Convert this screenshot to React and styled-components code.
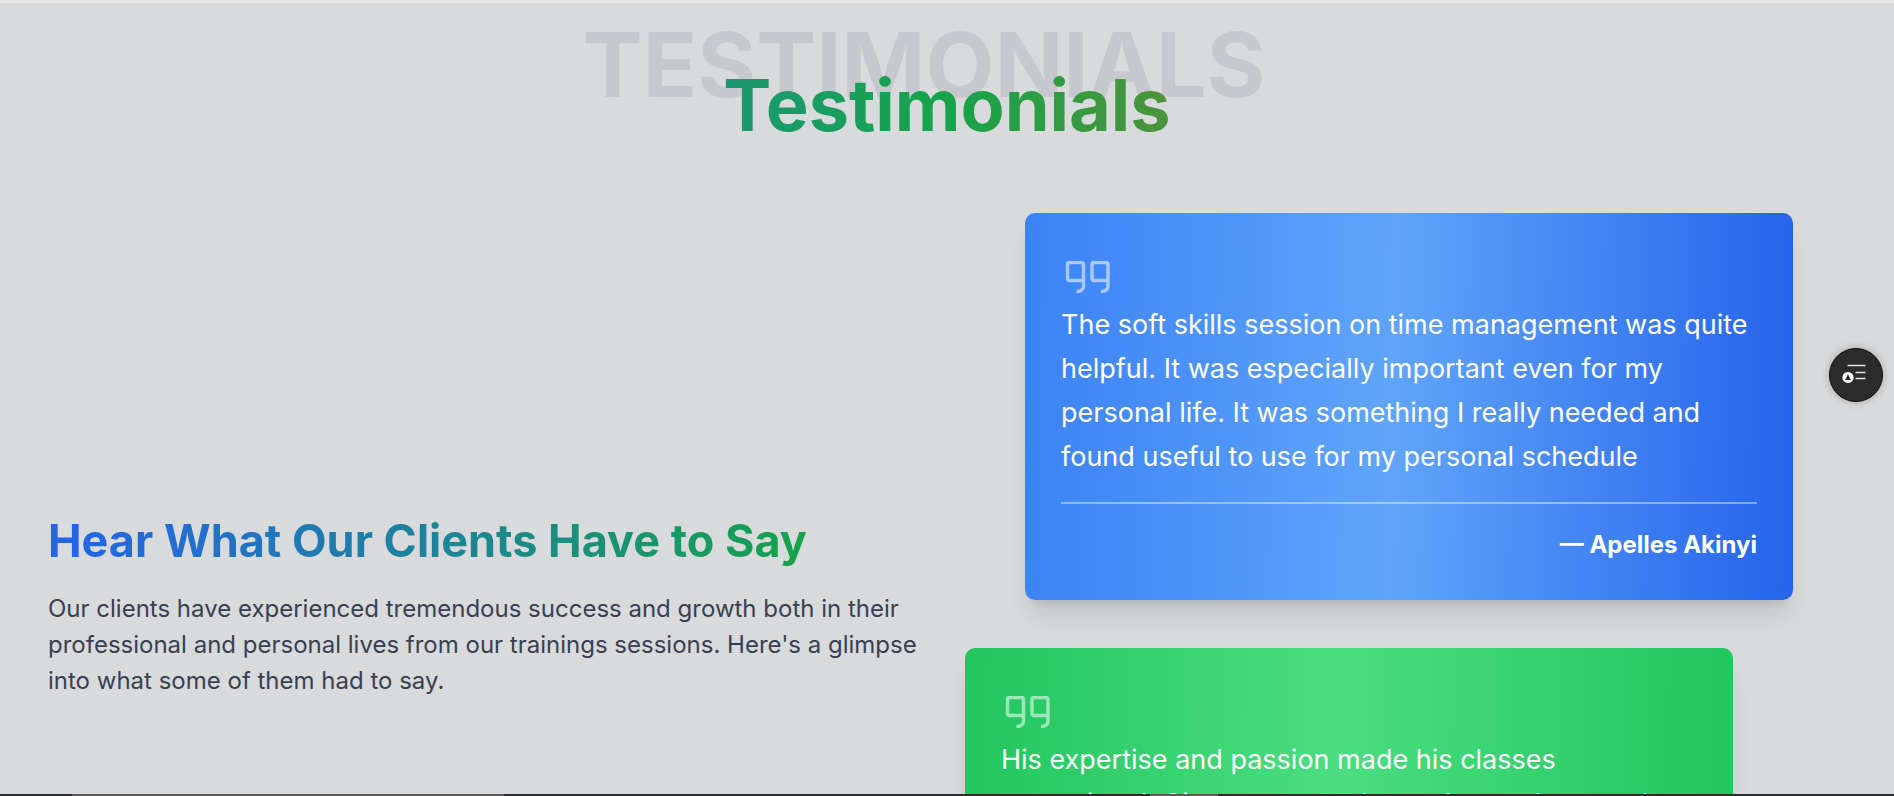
import styled, { createGlobalStyle } from "styled-components";

const GlobalStyle = createGlobalStyle`
	html, body {
		margin: 0;
		padding: 0;
		height: 100%;
		overflow: hidden;
		background: #d8d9db;
	}
	* {
		box-sizing: border-box;
	}
`;

const Page = styled.div`
	height: 796px;
	display: flex;
	flex-direction: column;
	position: relative;
	overflow: hidden;
	font-family: Inter, "Liberation Sans", sans-serif;
	background: #d9dadc;
`;

const TopEdge = styled.div`
	height: 3px;
	flex: none;
	background: #e7e7e8;
`;

const BottomEdge = styled.div`
	height: 2px;
	flex: none;
	display: flex;
	background: #2a2c2d;
`;

const EdgeMark = styled.span`
	width: ${(p) => p.$width}px;
	margin-left: ${(p) => p.$offset}px;
	background: #5a5a5a;
`;

const Content = styled.main`
	flex: 1;
	min-height: 0;
	overflow: hidden;
	padding: 0 48px;
`;

const Heading = styled.header`
	position: relative;
	height: 210px;
	padding-top: 62px;
	text-align: center;
`;

const GhostTitle = styled.div`
	position: absolute;
	top: 17px;
	left: 0;
	right: 46px;
	font-size: 90px;
	font-weight: 700;
	line-height: 90px;
	color: #c7c8cd;
`;

const Title = styled.h2`
	position: relative;
	margin: 0;
	font-size: 72px;
	font-weight: 700;
	line-height: 80px;
`;

const TitleGradient = styled.span`
	background: linear-gradient(90deg, #1b9873, #16a34a 50%, #4d933c);
	-webkit-background-clip: text;
	background-clip: text;
	color: transparent;
`;

const Columns = styled.div`
	display: grid;
	grid-template-columns: 885px 1fr;
	gap: 32px;
`;

const Intro = styled.div`
	padding-top: 300px;
`;

const IntroTitle = styled.h3`
	display: inline-block;
	margin: 0 0 22px;
	font-size: 45px;
	font-weight: 700;
	line-height: 56px;
	background: linear-gradient(90deg, #2563eb, #16a34a);
	-webkit-background-clip: text;
	background-clip: text;
	color: transparent;
`;

const IntroText = styled.p`
	margin: 0;
	font-size: 24px;
	line-height: 36px;
	color: #374151;
`;

const Cards = styled.div`
	display: flex;
	flex-direction: column;
	gap: 48px;
`;

const Card = styled.article`
	width: 768px;
	margin-left: ${(p) => p.$indent || 0}px;
	padding: 48px 36px 39px;
	border-radius: 10px;
	color: #fff;
	background: ${(p) => p.$bg};
	box-shadow: 0 20px 25px -5px rgba(0, 0, 0, 0.1), 0 8px 10px -6px rgba(0, 0, 0, 0.1);
`;

const QuoteMark = styled.svg`
	display: block;
	width: 46px;
	height: 34px;
	margin: 0 0 8px 3px;
	fill: none;
	stroke: rgba(255, 255, 255, 0.55);
	stroke-width: 3.4;
`;

const CardText = styled.p`
	margin: 0;
	font-size: 27px;
	line-height: 44px;
`;

const Divider = styled.hr`
	height: 2px;
	margin: 23px 0 0;
	border: none;
	background: rgba(255, 255, 255, 0.42);
`;

const Author = styled.p`
	margin: 25px 0 0;
	text-align: right;
	font-size: 24px;
	font-weight: 700;
	line-height: 32px;
`;

const FloatButton = styled.button`
	position: absolute;
	top: 348px;
	left: 1829px;
	width: 54px;
	height: 54px;
	padding: 0;
	display: flex;
	align-items: center;
	justify-content: center;
	border: 1.5px solid #111;
	border-radius: 50%;
	background: #2b2b2b;
	box-shadow: 0 0 8px rgba(0, 0, 0, 0.25);
`;

const Quote = () => (
	<QuoteMark viewBox="0 0 46 34">
		<path d="M19.5 19.5H5.5Q3.5 19.5 3.5 17.5V3.5Q3.5 1.5 5.5 1.5H17.5Q19.5 1.5 19.5 3.5V25Q19.5 30.5 12.5 30.5" />
		<path d="M44 19.5H30Q28 19.5 28 17.5V3.5Q28 1.5 30 1.5H42Q44 1.5 44 3.5V25Q44 30.5 37 30.5" />
	</QuoteMark>
);

const BLUE = "linear-gradient(91deg, #3b82f6, #60a5fa 48%, #2563eb)";
const GREEN = "linear-gradient(91deg, #22c55e, #4ade80 48%, #22c55e)";

const App = () => (
	<Page>
		<GlobalStyle />
		<TopEdge />
		<Content>
			<Heading>
				<GhostTitle>TESTIMONIALS</GhostTitle>
				<Title>
					<TitleGradient>Testimonials</TitleGradient>
				</Title>
			</Heading>
			<Columns>
				<Intro>
					<IntroTitle>Hear What Our Clients Have to Say</IntroTitle>
					<IntroText>
						Our clients have experienced tremendous success and growth both in their professional and personal lives from our trainings sessions. Here's a glimpse into what some of them had to say.
					</IntroText>
				</Intro>
				<Cards>
					<Card $bg={BLUE} $indent={60}>
						<Quote />
						<CardText>
							The soft skills session on time management was quite helpful. It was especially important even for my personal life. It was something I really needed and found useful to use for my personal schedule
						</CardText>
						<Divider />
						<Author>— Apelles Akinyi</Author>
					</Card>
					<Card $bg={GREEN}>
						<Quote />
						<CardText>
							His expertise and passion made his classes exceptional. Circumstances have changed so much since
						</CardText>
					</Card>
				</Cards>
			</Columns>
		</Content>
		<BottomEdge>
			<EdgeMark $offset={72} $width={432} />
			<EdgeMark $offset={646} $width={68} />
		</BottomEdge>
		<FloatButton aria-label="Open menu">
			<svg width="32" height="24" viewBox="-4 0 32 24" fill="none" stroke="#e4e4e4" strokeWidth="1.7">
				<path d="M3.5 2.5H21.5M11.5 9.5H21.5M11.5 15.5H21.5" />
				<circle cx="4" cy="14.5" r="5.6" fill="#fff" stroke="none" />
				<path d="M4 11.3L7 17H1Z" fill="#2b2b2b" stroke="none" />
			</svg>
		</FloatButton>
	</Page>
);

export default App;
